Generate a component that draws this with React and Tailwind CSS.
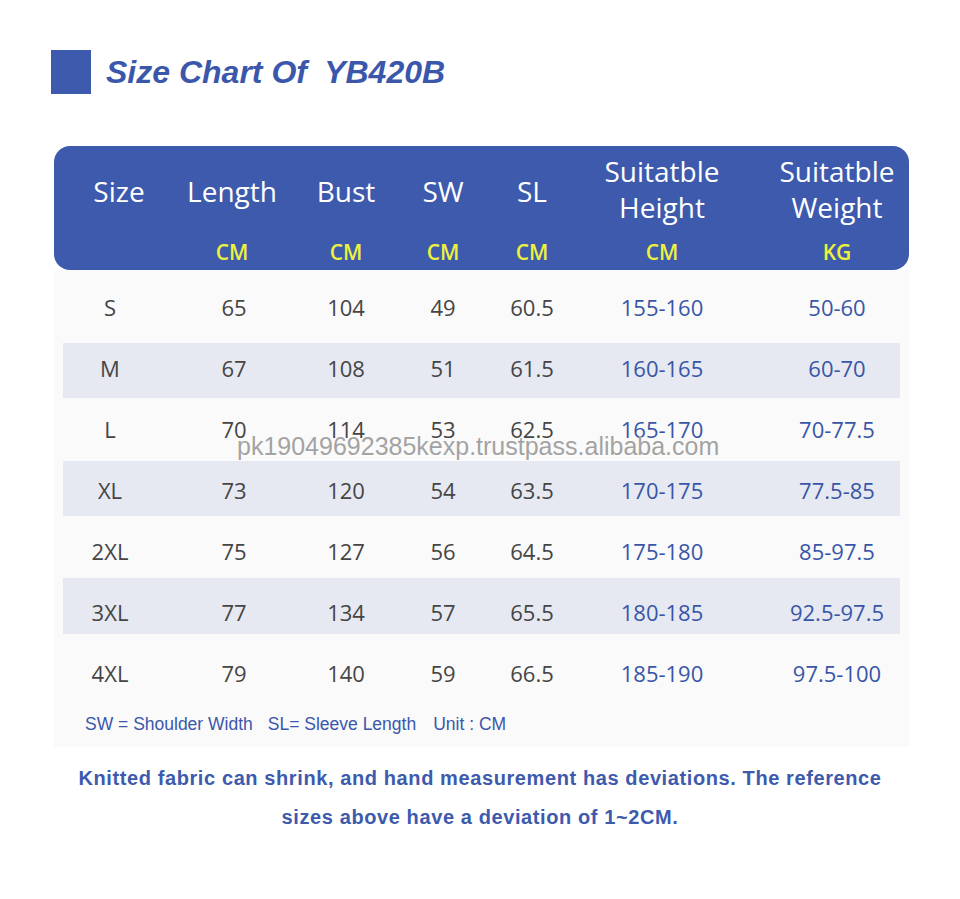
const cols = 'grid grid-cols-[112px_136px_88px_106px_72px_188px_153px]';
const bodyCols = 'grid grid-cols-[103px_136px_88px_106px_72px_188px_144px]';

const rows = [
  { v: ['S', '65', '104', '49', '60.5', '155-160', '50-60'], cls: 'h-[73px] pt-[22px]' },
  { v: ['M', '67', '108', '51', '61.5', '160-165', '60-70'], cls: 'h-[55px] pt-[10px] bg-[#e6e9f1]' },
  { v: ['L', '70', '114', '53', '62.5', '165-170', '70-77.5'], cls: 'h-[63px] pt-[16px]' },
  { v: ['XL', '73', '120', '54', '63.5', '170-175', '77.5-85'], cls: 'h-[55px] pt-[14px] bg-[#e6e9f1]' },
  { v: ['2XL', '75', '127', '56', '64.5', '175-180', '85-97.5'], cls: 'h-[62px] pt-[20px]' },
  { v: ['3XL', '77', '134', '57', '65.5', '180-185', '92.5-97.5'], cls: 'h-[56px] pt-[19px] bg-[#e6e9f1]' },
  { v: ['4XL', '79', '140', '59', '66.5', '185-190', '97.5-100'], cls: 'h-[66px] pt-[24px]' },
];

const heads = [
  { t: ['Size'], u: '', cls: 'pl-[18px]' },
  { t: ['Length'], u: 'CM', cls: 'pr-[4px]' },
  { t: ['Bust'], u: 'CM', cls: '' },
  { t: ['SW'], u: 'CM', cls: '' },
  { t: ['SL'], u: 'CM', cls: '' },
  { t: ['Suitatble', 'Height'], u: 'CM', cls: '' },
  { t: ['Suitatble', 'Weight'], u: 'KG', cls: 'pl-[9px]' },
];

const App = () => {
  return (
    <div className="relative w-[960px] h-[899px] bg-white font-['Open_Sans',sans-serif]">
      {/* Title */}
      <div className="flex items-center pt-[50px] pl-[51px]">
        <div className="w-[40px] h-[44px] bg-[#3d5aad]" />
        <h1 className="ml-[15px] whitespace-pre text-[32px] font-bold italic text-[#3a57ab] font-['Liberation_Sans',Arial,sans-serif] leading-none">
          {'Size Chart Of  YB420B'}
        </h1>
      </div>

      {/* Table */}
      <div className="mt-[52px] ml-[54px] w-[855px]">
        <div className={`${cols} h-[124px] rounded-[16px] bg-[#3d5aad] text-white`}>
          {heads.map((h, i) => (
            <div key={i} className={`flex flex-col items-center ${h.cls}`}>
              <div className={`h-[90px] flex flex-col items-center justify-center text-[28px] font-medium leading-[36px] ${h.t.length > 1 ? 'pb-[5px]' : ''}`}>
                {h.t.map((l) => (
                  <span key={l}>{l}</span>
                ))}
              </div>
              <div className="h-[34px] flex items-center text-[21px] font-semibold text-[#eef23c]">{h.u}</div>
            </div>
          ))}
        </div>

        <div className="bg-[#fafafa] pb-[13px]">
          {rows.map((r) => (
            <div key={r.v[0]} className={`${bodyCols} mx-[9px] items-start text-[22px] leading-[30px] ${r.cls}`}>
              {r.v.map((c, i) => (
                <div
                  key={i}
                  className={`text-center ${i === 0 ? 'pr-[9px]' : ''} ${i === 6 ? 'pl-[18px]' : ''} ${i >= 5 ? 'text-[#3856a8]' : 'text-[#454545]'}`}
                >
                  {c}
                </div>
              ))}
            </div>
          ))}
          <div className="mt-[14px] pl-[31px] h-[20px] flex items-center text-[17.5px] text-[#3a57ab] font-['Liberation_Sans',Arial,sans-serif]">
            <span>SW = Shoulder Width</span>
            <span className="ml-[15px]">SL= Sleeve Length</span>
            <span className="ml-[17px]">Unit : CM</span>
          </div>
        </div>
      </div>

      {/* Note */}
      <div className="mt-[12px] text-center text-[20px] font-bold tracking-[0.6px] leading-[39px] text-[#3d5aad] font-['Liberation_Sans',Arial,sans-serif]">
        <p>Knitted fabric can shrink, and hand measurement has deviations. The reference</p>
        <p>sizes above have a deviation of 1~2CM.</p>
      </div>

      {/* Watermark */}
      <div className="absolute left-[237px] top-[432px] text-[25px] leading-[28px] text-[#a3a3a3] font-['Liberation_Sans',Arial,sans-serif] [text-shadow:1px_1px_0_rgba(255,255,255,0.8)]">
        pk19049692385kexp.trustpass.alibaba.com
      </div>
    </div>
  );
};

export default App;
